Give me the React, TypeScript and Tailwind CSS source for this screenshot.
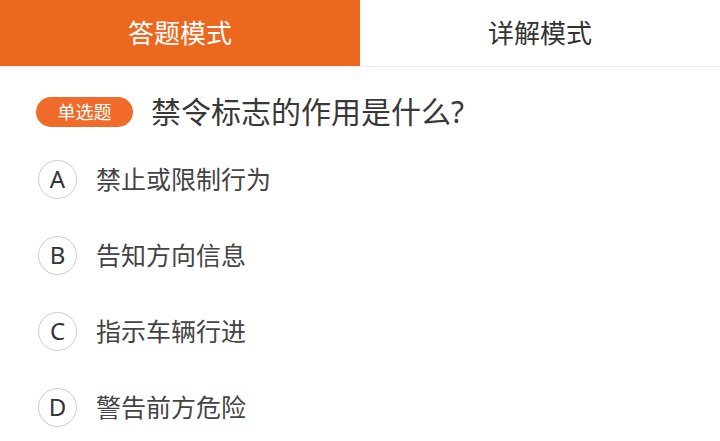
import React from 'react';

const options = [
  { key: 'A', text: '禁止或限制行为' },
  { key: 'B', text: '告知方向信息' },
  { key: 'C', text: '指示车辆行进' },
  { key: 'D', text: '警告前方危险' },
];

export default function App() {
  const [mode, setMode] = React.useState<'answer' | 'explain'>('answer');

  return (
    <div
      className="w-[720px] h-[441px] overflow-hidden bg-white"
      style={{ fontFamily: '"Noto Sans", "Noto Sans CJK SC", sans-serif' }}
    >
      {/* Mode tabs */}
      <div className="flex h-[67px] border-b border-[#ededed]">
        <button
          type="button"
          onClick={() => setMode('answer')}
          className={`flex-1 flex items-center justify-center text-[26px] leading-none ${mode === 'answer' ? 'bg-[#ec681f] text-white' : 'bg-white text-[#333]'}`}
        >
          答题模式
        </button>
        <button
          type="button"
          onClick={() => setMode('explain')}
          className={`flex-1 flex items-center justify-center text-[26px] leading-none ${mode === 'explain' ? 'bg-[#ec681f] text-white' : 'bg-white text-[#333]'}`}
        >
          详解模式
        </button>
      </div>

      {/* Question */}
      <div className="flex items-center pt-[30px] pl-[36px]">
        <span className="flex items-center justify-center w-[97px] h-[30px] rounded-full bg-[#f06a2a] text-white text-[18px] leading-none">
          单选题
        </span>
        <span className="ml-[18px] text-[30px] leading-[30px] text-[#383838]">禁令标志的作用是什么?</span>
      </div>

      {/* Options */}
      <div className="mt-[14px]">
        {options.map(opt => (
          <div key={opt.key} className="flex items-center h-[76px] pl-[38px]">
            <span className="flex items-center justify-center w-[39px] h-[39px] rounded-full border-[1.5px] border-[#c9ced2] text-[24px] leading-none text-[#333]">
              {opt.key}
            </span>
            <span className="ml-[19px] text-[25px] leading-none text-[#444]">{opt.text}</span>
          </div>
        ))}
      </div>
    </div>
  );
}
